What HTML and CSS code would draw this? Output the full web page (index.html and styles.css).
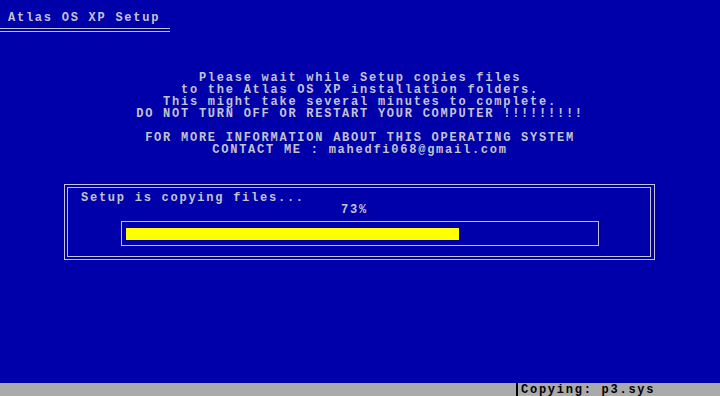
FILE: index.html
```html
<!DOCTYPE html>
<html lang="en">
<head>
  <meta charset="UTF-8">
  <title>Atlas OS XP Setup</title>
  <link rel="stylesheet" href="styles.css">
</head>
<body>
  <div class="screen">
    <header class="setup-header">
      <h1>Atlas OS XP Setup</h1>
      <div class="header-rule"></div>
    </header>

    <div class="message">
      <p>Please wait while Setup copies files</p>
      <p>to the Atlas OS XP installation folders.</p>
      <p>This might take several minutes to complete.</p>
      <p>DO NOT TURN OFF OR RESTART YOUR COMPUTER !!!!!!!!!</p>
      <p>&nbsp;</p>
      <p>FOR MORE INFORMATION ABOUT THIS OPERATING SYSTEM</p>
      <p>CONTACT ME : mahedfi068@gmail.com</p>
    </div>

    <div class="copy-box">
      <div class="copy-box-inner">
        <div class="copy-label">Setup is copying files...</div>
        <div class="copy-percent">73%</div>
        <div class="progress">
          <div class="progress-track">
            <div class="progress-fill" style="width: 73%"></div>
          </div>
        </div>
      </div>
    </div>
  </div>

  <footer class="status-bar">
    <div class="status-cell">Copying: p3.sys</div>
  </footer>
</body>
</html>
```

FILE: styles.css
```css
html, body {
  margin: 0;
  padding: 0;
  height: 100%;
}
body {
  background: #0000aa;
  color: #c4c4d0;
  font-family: "Liberation Mono", "DejaVu Sans Mono", monospace;
  font-size: 12px;
  font-weight: bold;
  letter-spacing: 1.75px;
  line-height: 12px;
  display: flex;
  flex-direction: column;
  overflow: hidden;
}
.screen {
  flex: 1;
}
.setup-header {
  padding-top: 12px;
}
.setup-header h1 {
  margin: 0 0 0 8px;
  font-size: 12px;
  line-height: 12px;
  font-weight: bold;
}
.header-rule {
  width: 170px;
  height: 2px;
  margin-top: 4px;
  border-top: 1px solid #c4c4d0;
  border-bottom: 1px solid #c4c4d0;
}
.message {
  margin-top: 40px;
  text-align: center;
}
.message p {
  margin: 0;
  white-space: pre;
}
.copy-box {
  width: 584px;
  margin: 28px 0 0 64px;
  padding: 2px 3px 2px 2px;
  border: 1px solid #c4c4d0;
}
.copy-box-inner {
  border: 1px solid #c4c4d0;
  padding: 4px 0 10px 13px;
}
.copy-label {
  white-space: pre;
}
.copy-percent {
  text-align: center;
  padding-right: 22px;
}
.progress {
  width: 472px;
  margin: 5px 0 0 40px;
  padding: 6px 0 5px 4px;
  border: 1px solid #c4c4d0;
}
.progress-track {
  width: 456px;
  height: 12px;
}
.progress-fill {
  height: 100%;
  background: #ffff00;
}
.status-bar {
  height: 13px;
  background: #aaaaaa;
  color: #000;
  display: flex;
  justify-content: flex-end;
  overflow: hidden;
}
.status-cell {
  width: 199px;
  border-left: 2px solid #000;
  padding: 2px 0 0 3px;
  line-height: 11px;
  white-space: pre;
}
```
